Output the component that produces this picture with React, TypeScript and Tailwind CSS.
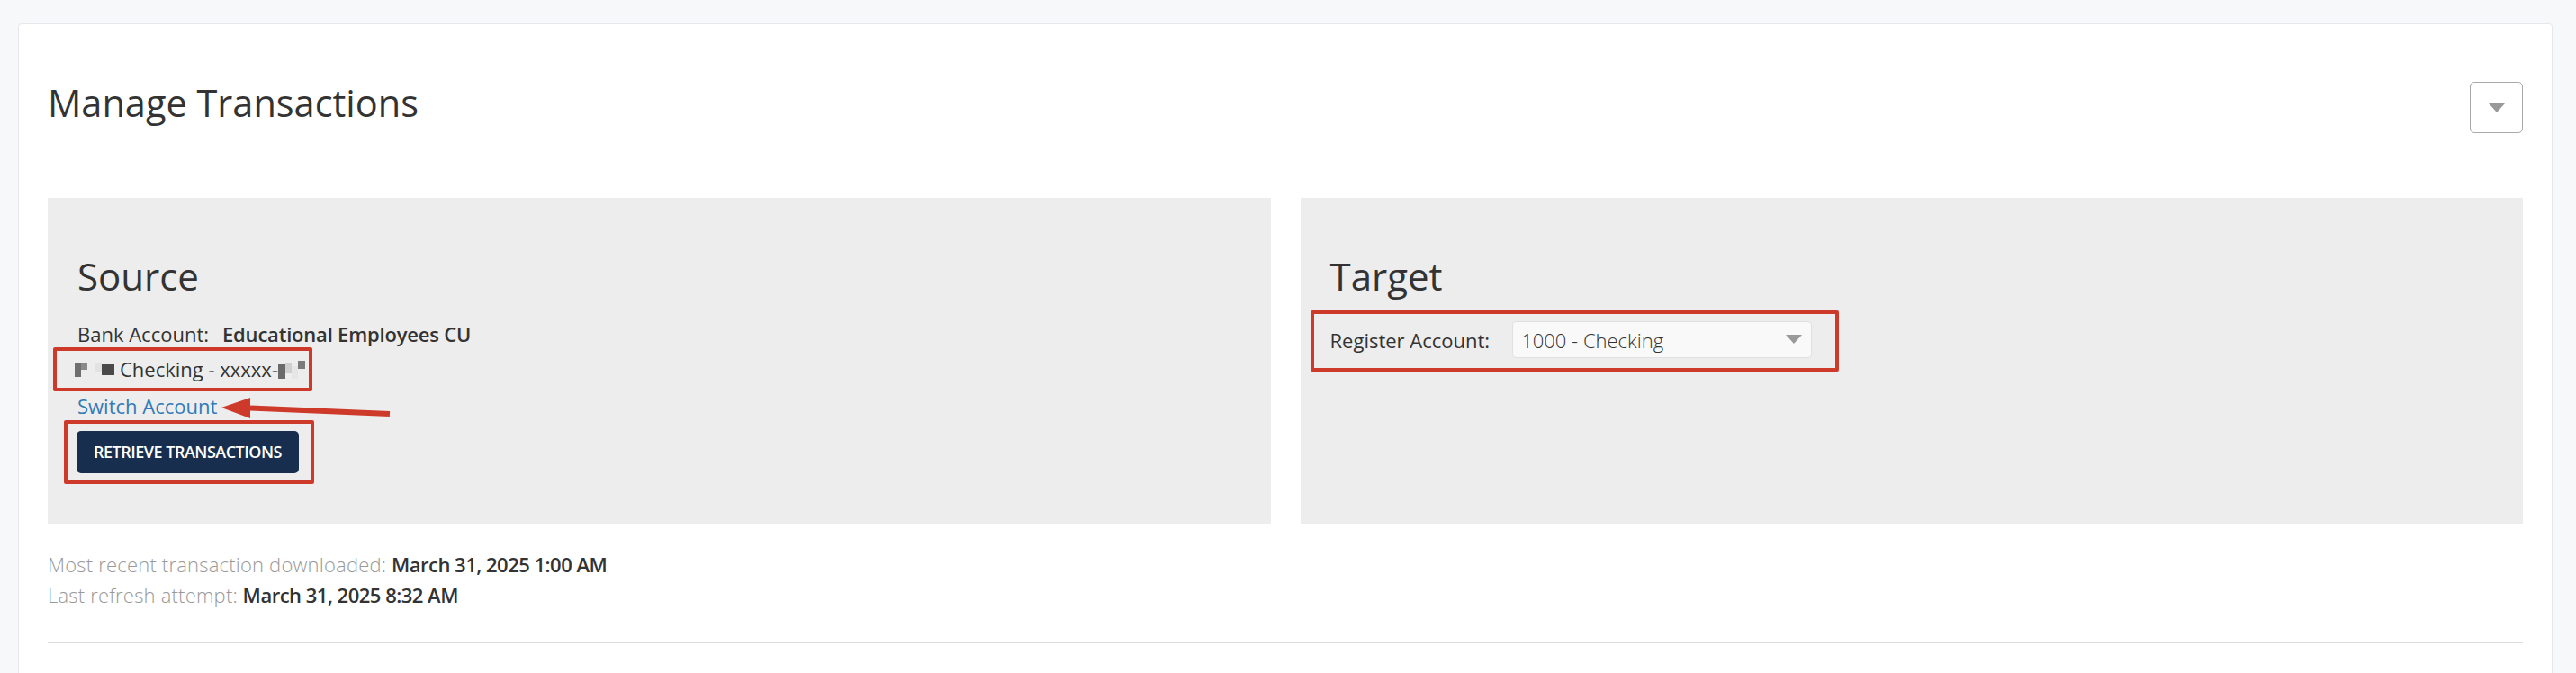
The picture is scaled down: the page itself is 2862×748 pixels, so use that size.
const font = { fontFamily: '"Open Sans", "Liberation Sans", sans-serif' };

function Redacted({ blocks }: { blocks: [string, number, number, number][] }) {
  // pixelated redaction: [colour, width, height, offsetY]
  return (
    <span className="inline-flex items-start h-[18px] align-[-2px]">
      {blocks.map(([c, w, h, y], i) => (
        <span key={i} className="inline-block" style={{ background: c, width: w, height: h, marginTop: y }} />
      ))}
    </span>
  );
}

function Caret({ className }: { className: string }) {
  return (
    <svg viewBox="0 0 18 10" className={className}>
      <path d="M0 0h18L9 10z" fill="#999" />
    </svg>
  );
}

export default function App() {
  return (
    <div className="relative min-h-[748px] bg-[#f7f8fa] pl-[20px] pr-[26px] pt-[26px] text-[#333]" style={font}>
      <div className="bg-white border border-[#e5e7ea] rounded-[4px] px-[32px] pt-[64px] pb-[40px]">
        <div className="flex items-start justify-between">
          <h1 className="text-[41.5px] leading-[46px] font-normal text-[#333]">Manage Transactions</h1>
          <button className="w-[59px] h-[57px] border-[1.5px] border-[#a9a9a9] rounded-[5px] flex items-center justify-center">
            <Caret className="w-[18px] h-[10px]" />
          </button>
        </div>

        <div className="mt-[72px] grid grid-cols-2 gap-[33px]">
          <div className="bg-[#ededed] h-[362px] px-[33px] pt-[64px]">
            <h2 className="text-[42px] leading-[46px] font-normal">Source</h2>
            <div className="mt-[26px] text-[22px] leading-[30px]">
              Bank Account:<span className="ml-[15px] font-semibold tracking-[-0.2px]">Educational Employees CU</span>
            </div>
            <div className="mt-[9px] text-[22px] leading-[30px] -ml-[3px] flex items-center">
              <Redacted blocks={[["#6f6f6f", 7, 16, 2], ["#8a8a8a", 7, 8, 2], ["#ededed", 8, 8, 0], ["#e2e2e2", 8, 10, 2], ["#4a4a4a", 14, 12, 4]]} />
              <span className="ml-[6px]">Checking - xxxxx-</span>
              <Redacted blocks={[["#6a6a6a", 8, 16, 4], ["#cfcfcf", 7, 12, 2], ["#e6e6e6", 7, 14, 6], ["#7b7b7b", 8, 9, 0]]} />
            </div>
            <div className="mt-[11px] text-[22px] leading-[30px] text-[#337ab7]">Switch Account</div>
            <button className="mt-[13px] -ml-[1px] w-[247px] h-[47px] bg-[#172e4e] rounded-[5px] text-white text-[18px] font-semibold tracking-[-0.5px] uppercase">
              Retrieve Transactions
            </button>
          </div>

          <div className="bg-[#ededed] h-[362px] px-[33px] pt-[64px]">
            <h2 className="text-[42px] leading-[46px] font-normal">Target</h2>
            <div className="mt-[27px] flex items-start">
              <span className="mt-[6px] text-[22px] leading-[30px]">Register Account:</span>
              <div className="ml-[25px] w-[333px] h-[41px] bg-[#f9f9f9] border border-[#e0e0e0] rounded-[4px] pl-[9px] pr-[10px] pt-[5px] flex items-start justify-between">
                <span className="text-[22px] leading-[30px] font-light text-[#333]">1000 - Checking</span>
                <Caret className="w-[18px] h-[10px] mt-[9px]" />
              </div>
            </div>
          </div>
        </div>

        <div className="mt-[28px] text-[22px] leading-[34px]">
          <div>
            <span className="font-light text-[#999] tracking-[0.2px]">Most recent transaction downloaded:</span>{" "}
            <span className="font-semibold tracking-[-0.5px]">March 31, 2025 1:00 AM</span>
          </div>
          <div>
            <span className="font-light text-[#999] tracking-[0.2px]">Last refresh attempt:</span>{" "}
            <span className="font-semibold tracking-[-0.5px]">March 31, 2025 8:32 AM</span>
          </div>
        </div>
        <div className="mt-[35px] h-[2px] bg-[#dedede]" />
      </div>

      {/* annotation overlays */}
      <div className="absolute left-[59px] top-[386px] w-[288px] h-[49px] border-[4px] border-[#cd3a2a] rounded-[2px]" />
      <div className="absolute left-[71px] top-[467px] w-[278px] h-[71px] border-[4px] border-[#cd3a2a] rounded-[2px]" />
      <div className="absolute left-[1456px] top-[345px] w-[587px] h-[68px] border-[4px] border-[#cd3a2a] rounded-[2px]" />
      <svg className="absolute left-[240px] top-[436px] w-[200px] h-[34px]" viewBox="0 0 200 34">
        <path d="M38 17.5 L193 24" stroke="#cd3a2a" strokeWidth="6" fill="none" />
        <path d="M6 17 L38 6 L38 29 Z" fill="#cd3a2a" />
      </svg>
    </div>
  );
}
